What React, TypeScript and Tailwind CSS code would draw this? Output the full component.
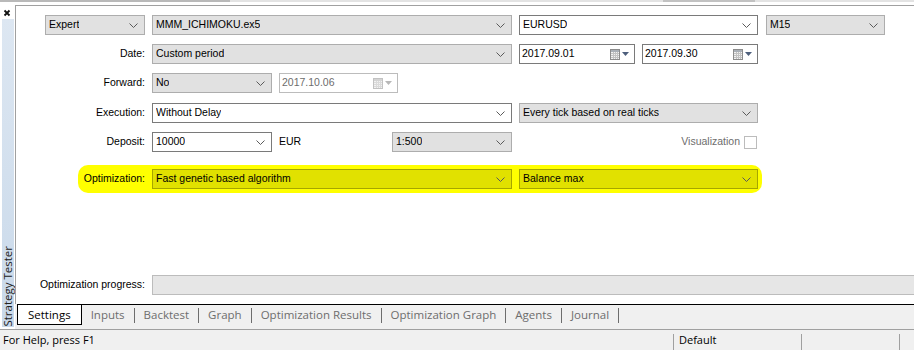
import clsx from 'clsx'

type Tone = 'gray' | 'white' | 'hl'

const TONE: Record<Tone, string> = {
  gray: 'border-[#adadad] bg-[#e1e1e1]',
  white: 'border-[#7a7a7a] bg-white',
  hl: 'border-[#a6a600] bg-[#e1e100]',
}

const FORM_FONT = "font-['Liberation_Sans',Arial,sans-serif] text-[10.5px]"
const UI_FONT = "font-['Open_Sans','Noto_Sans',sans-serif] text-[11.5px]"

const TABS = ['Inputs', 'Backtest', 'Graph', 'Optimization Results', 'Optimization Graph', 'Agents', 'Journal']

function Chevron() {
  return (
    <svg width="9" height="5" viewBox="0 0 9 5" className="shrink-0" aria-hidden="true">
      <path d="M0.5 0.5 L4.5 4.5 L8.5 0.5" fill="none" stroke="#5a5a5a" strokeWidth="1" />
    </svg>
  )
}

function CalendarIcon({ disabled = false }: { disabled?: boolean }) {
  return (
    <div className="flex items-center gap-[2px]">
      <svg width="10" height="11" viewBox="0 0 10 11" aria-hidden="true">
        <rect x="0.5" y="0.5" width="9" height="10" fill="#f2f2f2" stroke={disabled ? '#c2c2c2' : '#8c8c8c'} />
        <rect x="1" y="1" width="8" height="2" fill={disabled ? '#d4d4d4' : '#a9afb6'} />
        <path
          d="M1 4.5H9M1 6.5H9M1 8.5H9M3.5 3V10M5.5 3V10M7.5 3V10"
          stroke={disabled ? '#dadada' : '#c2c2c2'}
          strokeWidth="1"
        />
      </svg>
      <svg width="7" height="4" viewBox="0 0 7 4" aria-hidden="true">
        <path d="M0 0H7L3.5 4Z" fill={disabled ? '#b8b8b8' : '#4d5f7c'} />
      </svg>
    </div>
  )
}

function Combo({ text, tone = 'gray', className }: { text: string; tone?: Tone; className: string }) {
  return (
    <div
      className={clsx(
        'flex h-[20px] shrink-0 items-center justify-between border pl-[3px] pr-[6px] text-black',
        TONE[tone],
        className
      )}
    >
      <span className="truncate">{text}</span>
      <Chevron />
    </div>
  )
}

function DateBox({ text, disabled = false, className }: { text: string; disabled?: boolean; className: string }) {
  return (
    <div
      className={clsx(
        'flex h-[20px] shrink-0 items-center justify-between border bg-white pl-[2px] pr-[5px]',
        disabled ? 'border-[#bcbcbc] text-[#6d6d6d]' : 'border-[#7a7a7a] text-black',
        className
      )}
    >
      <span>{text}</span>
      <CalendarIcon disabled={disabled} />
    </div>
  )
}

function Label({ text }: { text: string }) {
  return <div className="w-[136px] shrink-0 pr-[7px] text-right text-black">{text}</div>
}

export default function App() {
  return (
    <div className="flex h-[350px] w-[914px] flex-col overflow-hidden bg-white">
      <div className="flex h-[2px] shrink-0">
        <div className="w-[230px] bg-[#b9b9b9]" />
        <div className="w-[433px] bg-[#e3e3e3]" />
        <div className="w-[92px] bg-[#c2c2c2]" />
        <div className="flex-1 bg-[#e3e3e3]" />
      </div>
      <div className="h-[3px] shrink-0" />

      <div className="flex h-[324px] shrink-0">
        <aside className="flex w-[15px] shrink-0 flex-col">
          <svg width="15" height="11" viewBox="0 0 15 11" className="mt-[2px]" aria-hidden="true">
            <path d="M4.5 3.5 L9.5 8.5 M9.5 3.5 L4.5 8.5" stroke="#111" strokeWidth="1.8" />
          </svg>
          <div className="mb-[2px] ml-[2px] mt-[1px] flex w-[12px] flex-1 flex-col justify-end bg-gradient-to-b from-[#dde7f2] to-[#c9d9ea]">
            <span
              className={clsx(
                UI_FONT,
                'rotate-180 pb-[2px] leading-[12px] text-[#222] [writing-mode:vertical-rl]'
              )}
            >
              Strategy Tester
            </span>
          </div>
        </aside>

        <div className="flex min-w-0 flex-1 flex-col">
          <section
            className={clsx(
              FORM_FONT,
              'flex h-[299px] shrink-0 flex-col overflow-hidden border-l border-t border-[#a0a0a0] bg-white'
            )}
          >
            <div className="mt-[9px] flex pl-[29px]">
              <Combo text="Expert" className="w-[100px]" />
              <Combo text="MMM_ICHIMOKU.ex5" className="ml-[7px] w-[360px]" />
              <Combo text="EURUSD" tone="white" className="ml-[7px] w-[239px]" />
              <Combo text="M15" className="ml-[8px] w-[119px]" />
            </div>

            <div className="mt-[9px] flex items-center">
              <Label text="Date:" />
              <Combo text="Custom period" className="w-[360px]" />
              <DateBox text="2017.09.01" className="ml-[7px] w-[116px]" />
              <DateBox text="2017.09.30" className="ml-[7px] w-[116px]" />
            </div>

            <div className="mt-[9px] flex items-center">
              <Label text="Forward:" />
              <Combo text="No" className="w-[120px]" />
              <DateBox text="2017.10.06" disabled className="ml-[7px] w-[119px]" />
            </div>

            <div className="mt-[10px] flex items-center">
              <Label text="Execution:" />
              <Combo text="Without Delay" tone="white" className="w-[360px]" />
              <Combo text="Every tick based on real ticks" className="ml-[7px] w-[239px]" />
            </div>

            <div className="mt-[9px] flex items-center">
              <Label text="Deposit:" />
              <Combo text="10000" tone="white" className="w-[120px]" />
              <div className="w-[120px] shrink-0 pl-[7px] text-black">EUR</div>
              <Combo text="1:500" className="w-[120px]" />
              <div className="flex w-[246px] shrink-0 items-center justify-end gap-[4px] pr-[1px]">
                <span className="text-[#6d6d6d]">Visualization</span>
                <div className="h-[13px] w-[13px] border border-[#bcbcbc] bg-white" />
              </div>
            </div>

            <div className="ml-[62px] mt-[13px] flex w-[684px] items-center rounded-[10px] bg-[#ffff00] py-[4px]">
              <div className="w-[74px] shrink-0 pr-[7px] text-right text-black">Optimization:</div>
              <Combo text="Fast genetic based algorithm" tone="hl" className="w-[360px]" />
              <Combo text="Balance max" tone="hl" className="ml-[7px] w-[239px]" />
            </div>

            <div className="mt-[82px] flex items-center">
              <Label text="Optimization progress:" />
              <div className="h-[20px] flex-1 border-y border-l border-[#bcbcbc] bg-[#e6e6e6]" />
            </div>
          </section>

          <nav className={clsx(UI_FONT, 'flex h-[25px] shrink-0 bg-[#f0f0f0] pl-[2px]')}>
            <div className="flex flex-1 items-start border-t border-black">
              <div className="flex h-[20px] items-center border-x border-b border-black bg-white px-[10px] text-black">
                Settings
              </div>
              <div className="flex h-[20px] items-center gap-[9px] pl-[9px] text-[#6d6d6d]">
                {TABS.map((tab) => (
                  <div key={tab} className="flex items-center gap-[9px]">
                    <span>{tab}</span>
                    <div className="h-[15px] w-px bg-[#6d6d6d]" />
                  </div>
                ))}
              </div>
            </div>
          </nav>
        </div>
      </div>

      <footer
        className={clsx(
          "font-['Open_Sans','Noto_Sans',sans-serif] text-[11px]",
          'flex h-[21px] shrink-0 border-t border-[#a0a0a0] bg-[#f0f0f0] text-black'
        )}
      >
        <div className="flex w-[673px] shrink-0 items-center pl-[3px]">For Help, press F1</div>
        <div className="mt-[4px] w-px bg-[#a0a0a0]" />
        <div className="flex w-[127px] shrink-0 items-center pl-[5px]">Default</div>
        <div className="mt-[4px] w-px bg-[#a0a0a0]" />
        <div className="w-[97px] shrink-0" />
        <div className="mt-[4px] w-px bg-[#a0a0a0]" />
        <div className="flex-1" />
      </footer>
    </div>
  )
}
